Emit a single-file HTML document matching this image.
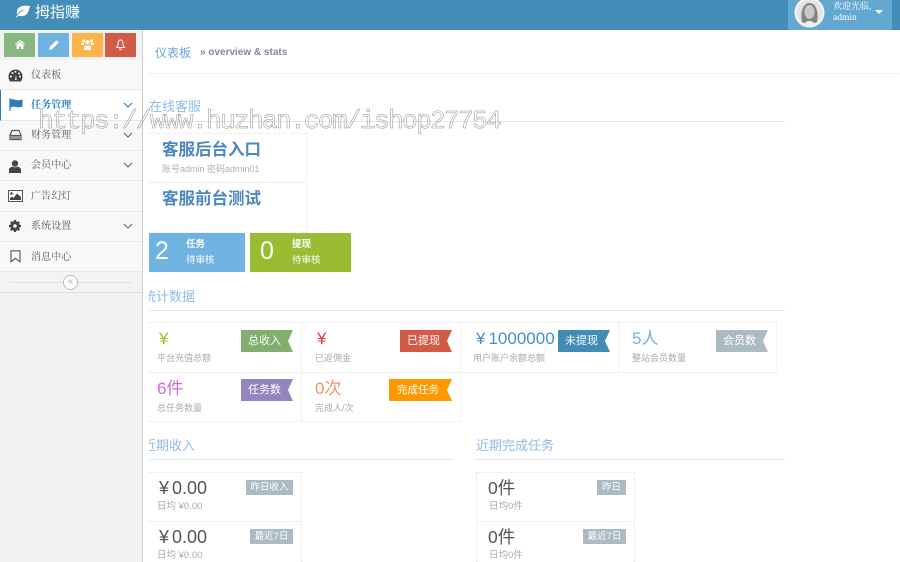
<!DOCTYPE html>
<html lang="zh"><head><meta charset="utf-8"><title>拇指赚</title>
<style>
html,body{margin:0;padding:0;background:#fff}
#p{width:900px;height:562px;overflow:hidden;position:relative;background:#fff;font-family:"Liberation Sans","Noto Sans CJK SC",sans-serif;color:#555;filter:blur(.3px)}
.a,.t,.b,.r,.l{position:absolute}
.t{white-space:nowrap}
.m{position:absolute;left:0;width:142px;background:#f8f8f8;border-bottom:1px solid #e8e8e8;box-sizing:border-box}
.mt{position:absolute;left:31px;font-family:"Liberation Serif","Noto Serif CJK SC",serif;font-size:10px;color:#585858;line-height:14px;white-space:nowrap;letter-spacing:.1px}
.ic{position:absolute}
.h{position:absolute;height:1px;background:#dce8f2}
.dh{position:absolute;height:0;border-top:1px dotted #e6e6e6}
.dv{position:absolute;width:0;border-left:1px dotted #e6e6e6}
.r{height:22px;line-height:23px;color:#fff;font-size:11px;text-align:center;clip-path:polygon(0 0,100% 0,calc(100% - 5px) 50%,100% 100%,0 100%);box-sizing:border-box;padding-right:5px}
.l{font-size:9px;color:#aaa;line-height:12px;white-space:nowrap}
.b{height:15px;line-height:15px;background:#abbac3;color:#fff;font-size:9.5px;text-align:center}
.hd{position:absolute;font-size:13px;line-height:18px;color:#8fbce6;white-space:nowrap;overflow:hidden}
.ch{position:absolute;width:12px;height:8px}
.y{letter-spacing:3px}
</style></head><body><div id="p">

<!-- header -->
<div class="a" style="left:0;top:0;width:900px;height:30px;background:#438eb9"></div>
<svg class="ic" style="left:15px;top:5px" width="16" height="13" viewBox="0 0 16 13"><path d="M15 1C9 0 3 1 2 6c-.3 1.500 0 3 .5 3.500C4 6.500 7 5 10 4.500 7 6 4 8 1 12l1 .5 1.500-2C7 12 12 11 13.500 6 14 4 14.500 3 15 1z" fill="#fff"/></svg>
<div class="t" style="left:35px;top:3px;font-size:15px;line-height:19px;color:#fff">拇指赚</div>
<div class="a" style="left:788px;top:0;width:104px;height:30px;background:#62a8d1"></div>
<svg class="ic" style="left:794px;top:-3px" width="31" height="31" viewBox="0 0 31 31"><circle cx="15.500" cy="15.500" r="15" fill="#f6f6f6"/><circle cx="15.500" cy="15.500" r="13" fill="#e4e4e4"/><path d="M8 25C6 15 9 6 15.500 6S25 15 23 25c-2 1.500-13 1.500-15 0z" fill="#858585"/><ellipse cx="15.500" cy="15" rx="5" ry="7" fill="#c9c9c9"/><path d="M10 28c1-3 3-4 5.500-4s4.500 1 5.500 4c-3 1.500-8 1.500-11 0z" fill="#f0f0f0"/></svg>
<div class="t" style="left:833px;top:0;font-family:'Liberation Serif','Noto Serif CJK SC',serif;font-size:9px;line-height:13px;color:#fff">欢迎光临,</div>
<div class="t" style="left:833px;top:12px;font-family:'Liberation Serif',serif;font-size:9.500px;line-height:13px;color:#fff">admin</div>
<div class="a" style="left:875px;top:10px;width:0;height:0;border-left:4px solid transparent;border-right:4px solid transparent;border-top:4px solid #fff"></div>

<!-- sidebar -->
<div class="a" style="left:0;top:30px;width:142px;height:532px;background:#f2f2f2;border-right:1px solid #ccc"></div>
<div class="a" style="left:4px;top:33px;width:31px;height:24px;background:#87b87f"></div>
<div class="a" style="left:38px;top:33px;width:31px;height:24px;background:#6fb3e0"></div>
<div class="a" style="left:72px;top:33px;width:31px;height:24px;background:#ffb44b"></div>
<div class="a" style="left:105px;top:33px;width:31px;height:24px;background:#d15b47"></div>
<svg class="ic" style="left:15px;top:40px" width="10" height="9" viewBox="0 0 10 9"><path d="M5 0 0 4.500l.6.600L5 1.200l4.400 3.900.6-.6-2-1.800V1H7v.6zM1.500 5v4h2.500V6.500h2V9h2.500V5L5 2z" fill="#fff"/></svg>
<svg class="ic" style="left:49px;top:40px" width="10" height="10" viewBox="0 0 10 10"><path d="M0 10l.7-3L6.800.9a1 1 0 0 1 1.400 0l.9.900a1 1 0 0 1 0 1.400L3 9.300z" fill="#fff"/></svg>
<svg class="ic" style="left:81px;top:39px" width="13" height="11" viewBox="0 0 13 11"><circle cx="6.500" cy="3" r="2" fill="#fff"/><circle cx="2.500" cy="2" r="1.500" fill="#fff"/><circle cx="10.500" cy="2" r="1.500" fill="#fff"/><path d="M3.500 6.500h6l.5 4.500H3zM0 4h3v2H.5zM10 4h3l-.5 2H10z" fill="#fff"/></svg>
<svg class="ic" style="left:115px;top:39px" width="11" height="11" viewBox="0 0 11 11"><path d="M5.500 1C3.500 1 3 3 3 5S2 8 1 8.500h9C9 8 8 7 8 5S7.500 1 5.500 1zM4.500 9.500a1 1 0 0 0 2 0" fill="none" stroke="#fff" stroke-width=".9"/></svg>

<div class="m" style="top:60px;height:30px"></div>
<div class="m" style="top:90px;height:31px;background:#fff;border-left:1px solid #2b7dbc"></div>
<div class="m" style="top:121px;height:30px"></div>
<div class="m" style="top:151px;height:30px"></div>
<div class="m" style="top:181px;height:31px"></div>
<div class="m" style="top:212px;height:30px"></div>
<div class="m" style="top:242px;height:30px"></div>
<div class="a" style="left:0;top:272px;width:142px;height:20px;background:#f3f3f3;border-bottom:1px solid #e0e0e0"></div>
<div class="a" style="left:10px;top:282px;width:121px;height:1px;background:#e0e0e0"></div>
<div class="a" style="left:63px;top:275px;width:13px;height:13px;border:1px solid #bbb;border-radius:50%;background:#fff;color:#aaa;font-size:10px;line-height:12px;text-align:center">«</div>

<div class="mt" style="top:69px">仪表板</div>
<div class="mt" style="top:99px;color:#2b7dbc;font-weight:bold">任务管理</div>
<div class="mt" style="top:129px">财务管理</div>
<div class="mt" style="top:159px">会员中心</div>
<div class="mt" style="top:190px">广告幻灯</div>
<div class="mt" style="top:220px">系统设置</div>
<div class="mt" style="top:251px">消息中心</div>

<svg class="ic" style="left:8px;top:69px" width="15" height="13" viewBox="0 0 15 13"><path d="M7.500 0.500A7 7 0 0 0 .5 7.500c0 2 .6 3.500 1.500 5h11c.9-1.500 1.500-3 1.500-5a7 7 0 0 0-7-7z" fill="#444"/><circle cx="3" cy="7.500" r="1" fill="#f8f8f8"/><circle cx="4.500" cy="4" r="1" fill="#f8f8f8"/><circle cx="7.500" cy="2.800" r="1" fill="#f8f8f8"/><circle cx="11" cy="4.500" r="1" fill="#f8f8f8"/><circle cx="12" cy="7.500" r="1" fill="#f8f8f8"/><path d="M7 11l1-5 .7 5z" fill="#f8f8f8"/></svg>
<svg class="ic" style="left:9px;top:98px" width="14" height="13" viewBox="0 0 14 13"><path d="M1 0v13" stroke="#2b7dbc" stroke-width="1.200"/><path d="M1.500 1.500C4 .5 5 1.500 7 2s4 0 6.500-.5v7C11 9.500 9 9.500 7 9s-3-.5-5.500.5z" fill="#2b7dbc"/></svg>
<svg class="ic" style="left:9px;top:129px" width="13" height="12" viewBox="0 0 13 12"><path d="M3 1.500h7L12 6v4.500H1V6zM1 6.500h11" fill="none" stroke="#555" stroke-width="1.200"/><path d="M2 7h9v3H2z" fill="#999"/></svg>
<svg class="ic" style="left:9px;top:160px" width="12" height="13" viewBox="0 0 12 13"><circle cx="6" cy="3.500" r="3.200" fill="#444"/><path d="M0 13V9.500C0 8 2 7 3.500 6.500c1 1 4 1 5 0C10 7 12 8 12 9.500V13z" fill="#444"/></svg>
<svg class="ic" style="left:8px;top:190px" width="15" height="12" viewBox="0 0 15 12"><rect x=".5" y=".5" width="14" height="11" fill="#fff" stroke="#555"/><circle cx="3.500" cy="3.500" r="1.300" fill="#444"/><path d="M2 10V8l2-1.500L5.500 8 9 3.500 13 7v3z" fill="#444"/></svg>
<svg class="ic" style="left:9px;top:220px" width="12" height="12" viewBox="0 0 12 12"><path d="M5 0h2l.3 1.500 1.100.5L9.700 1.200l1.200 1.200-.8 1.300.5 1.100L12 5v2l-1.400.3-.5 1.100.8 1.300-1.200 1.200-1.300-.8-1.100.5L7 12H5l-.3-1.400-1.100-.5-1.300.8-1.200-1.200.8-1.300-.5-1.100L0 7V5l1.400-.3.500-1.100-.8-1.300 1.200-1.200 1.300.8 1.100-.5z" fill="#444"/><circle cx="6" cy="6" r="1.800" fill="#f8f8f8"/></svg>
<svg class="ic" style="left:10px;top:250px" width="11" height="13" viewBox="0 0 11 13"><path d="M1 .8h9v11L5.500 8.300 1 11.800z" fill="none" stroke="#555" stroke-width="1.100"/></svg>

<svg class="ch" style="left:122px;top:101px" viewBox="0 0 12 8"><path d="M2 2l4 4 4-4" fill="none" stroke="#2b7dbc" stroke-width="1.100"/></svg>
<svg class="ch" style="left:122px;top:131px" viewBox="0 0 12 8"><path d="M2 2l4 4 4-4" fill="none" stroke="#666" stroke-width="1.100"/></svg>
<svg class="ch" style="left:122px;top:161px" viewBox="0 0 12 8"><path d="M2 2l4 4 4-4" fill="none" stroke="#666" stroke-width="1.100"/></svg>
<svg class="ch" style="left:122px;top:222px" viewBox="0 0 12 8"><path d="M2 2l4 4 4-4" fill="none" stroke="#666" stroke-width="1.100"/></svg>

<!-- breadcrumb -->
<div class="t" style="left:155px;top:44px;font-size:12px;line-height:18px;color:#6ea3d4">仪表板</div>
<div class="t" style="left:200px;top:46px;font-size:10px;line-height:14px;color:#8089a0;font-weight:bold">» overview &amp; stats</div>
<div class="dh" style="left:149px;top:73px;width:751px"></div>

<!-- online service -->
<div class="hd" style="left:149px;top:98px">在线客服</div>
<div class="h" style="left:149px;top:121px;width:636px"></div>
<div class="dh" style="left:149px;top:133px;width:157px"></div>
<div class="dh" style="left:149px;top:182px;width:157px;border-top-style:solid;border-color:#ebebeb"></div>
<div class="dh" style="left:149px;top:232px;width:157px"></div>
<div class="dv" style="left:306px;top:133px;height:100px"></div>
<div class="t" style="left:162px;top:139px;font-size:16.500px;line-height:22px;font-weight:bold;color:#4b88c0">客服后台入口</div>
<div class="l" style="left:162px;top:163px;color:#b0b0b0">账号admin 密码admin01</div>
<div class="t" style="left:162px;top:188px;font-size:16.500px;line-height:22px;font-weight:bold;color:#4b88c0">客服前台测试</div>

<!-- pending -->
<div class="a" style="left:149px;top:233px;width:96px;height:39px;background:#6fb3e0"></div>
<div class="a" style="left:250px;top:233px;width:101px;height:39px;background:#9abc32"></div>
<div class="t" style="left:155px;top:236px;font-size:25px;line-height:30px;color:#fff">2</div>
<div class="t" style="left:260px;top:236px;font-size:25px;line-height:30px;color:#fff">0</div>
<div class="t" style="left:186px;top:238px;font-size:9.500px;line-height:13px;color:#fff;font-weight:bold">任务</div>
<div class="t" style="left:186px;top:254px;font-size:9.500px;line-height:13px;color:#fff">待审核</div>
<div class="t" style="left:292px;top:238px;font-size:9.500px;line-height:13px;color:#fff;font-weight:bold">提现</div>
<div class="t" style="left:292px;top:254px;font-size:9.500px;line-height:13px;color:#fff">待审核</div>

<!-- stats -->
<div class="hd" style="left:149px;top:288px;width:60px;text-indent:-6px">统计数据</div>
<div class="h" style="left:149px;top:310px;width:636px"></div>
<div class="dh" style="left:149px;top:322px;width:627px"></div>
<div class="dh" style="left:149px;top:372px;width:627px"></div>
<div class="dh" style="left:149px;top:421px;width:311px"></div>
<div class="dv" style="left:301px;top:322px;height:99px"></div>
<div class="dv" style="left:460px;top:322px;height:99px"></div>
<div class="dv" style="left:618px;top:322px;height:50px"></div>
<div class="dv" style="left:776px;top:322px;height:50px"></div>

<div class="t" style="left:159px;top:328px;font-size:17px;line-height:22px;color:#9abc32">¥</div>
<div class="l" style="left:157px;top:352px">平台充值总额</div>
<div class="r" style="left:241px;top:330px;width:52px;background:#82af6f">总收入</div>

<div class="t" style="left:317px;top:328px;font-size:17px;line-height:22px;color:#d53f40">¥</div>
<div class="l" style="left:315px;top:352px">已返佣金</div>
<div class="r" style="left:400px;top:330px;width:52px;background:#d15b47">已提现</div>

<div class="t" style="left:476px;top:328px;font-size:17px;line-height:22px;color:#478fca"><span class="y">¥</span>1000000</div>
<div class="l" style="left:473px;top:352px">用户账户余额总额</div>
<div class="r" style="left:558px;top:330px;width:52px;background:#428bb5">未提现</div>

<div class="t" style="left:632px;top:328px;font-size:17px;line-height:22px;color:#6fb3e0">5人</div>
<div class="l" style="left:632px;top:352px">整站会员数量</div>
<div class="r" style="left:716px;top:330px;width:52px;background:#abbac3">会员数</div>

<div class="t" style="left:157px;top:378px;font-size:17px;line-height:22px;color:#c36fd4">6件</div>
<div class="l" style="left:157px;top:402px">总任务数量</div>
<div class="r" style="left:241px;top:379px;width:52px;background:#9585bf">任务数</div>

<div class="t" style="left:315px;top:378px;font-size:17px;line-height:22px;color:#f79263">0次</div>
<div class="l" style="left:315px;top:402px">完成人/次</div>
<div class="r" style="left:389px;top:379px;width:63px;background:#ff9800;font-size:10.500px">完成任务</div>

<!-- recent -->
<div class="hd" style="left:149px;top:437px;width:60px;text-indent:-6px">近期收入</div>
<div class="h" style="left:149px;top:459px;width:304px"></div>
<div class="hd" style="left:476px;top:437px">近期完成任务</div>
<div class="h" style="left:476px;top:459px;width:309px"></div>

<div class="dh" style="left:149px;top:472px;width:152px"></div>
<div class="dh" style="left:149px;top:521px;width:152px"></div>
<div class="dv" style="left:301px;top:472px;height:90px"></div>
<div class="t" style="left:159px;top:476px;font-size:18px;line-height:24px;color:#555"><span class="y">¥</span>0.00</div>
<div class="l" style="left:157px;top:501px;font-size:9.500px">日均 ¥0.00</div>
<div class="b" style="left:246px;top:480px;width:47px">昨日收入</div>
<div class="t" style="left:159px;top:525px;font-size:18px;line-height:24px;color:#555"><span class="y">¥</span>0.00</div>
<div class="l" style="left:157px;top:550px;font-size:9.500px">日均 ¥0.00</div>
<div class="b" style="left:250px;top:529px;width:43px">最近7日</div>

<div class="dh" style="left:476px;top:472px;width:158px"></div>
<div class="dh" style="left:476px;top:521px;width:158px"></div>
<div class="dv" style="left:476px;top:472px;height:90px"></div>
<div class="dv" style="left:634px;top:472px;height:90px"></div>
<div class="t" style="left:488px;top:476px;font-size:17.500px;line-height:24px;color:#555">0件</div>
<div class="l" style="left:489px;top:501px;font-size:9.500px">日均0件</div>
<div class="b" style="left:597px;top:480px;width:29px">昨日</div>
<div class="t" style="left:488px;top:525px;font-size:17.500px;line-height:24px;color:#555">0件</div>
<div class="l" style="left:489px;top:550px;font-size:9.500px">日均0件</div>
<div class="b" style="left:583px;top:529px;width:43px">最近7日</div>

<!-- watermark -->
<div class="t" style="left:38px;top:105px;font-family:'Liberation Mono',monospace;font-size:26px;line-height:32px;color:transparent;-webkit-text-stroke:.5px #909090;letter-spacing:-1.600px">https://www.huzhan.com/ishop27754</div>
</div></body></html>
